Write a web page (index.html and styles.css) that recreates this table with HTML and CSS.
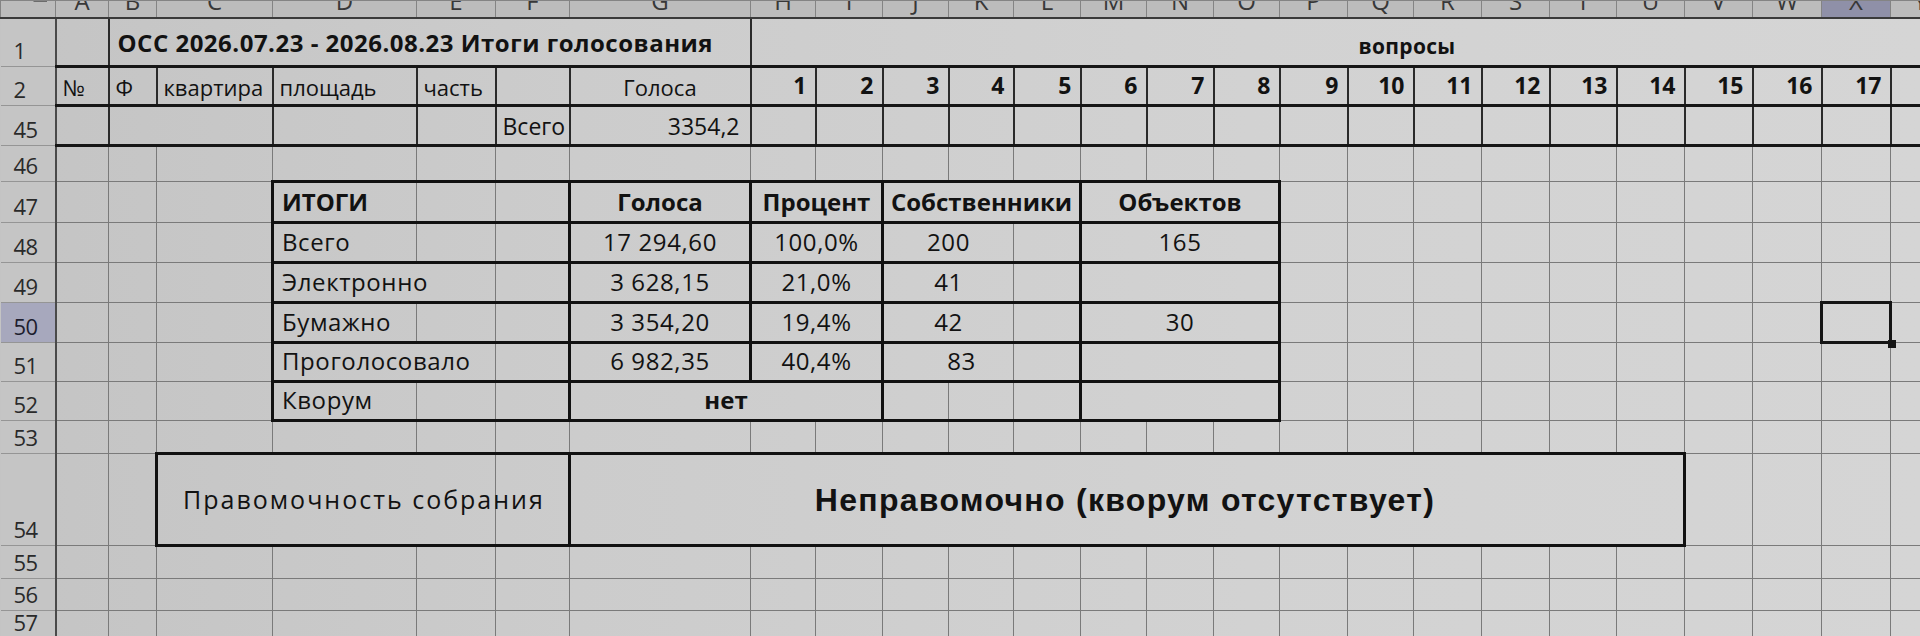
FILE: index.html
```html
<!DOCTYPE html>
<html lang="ru">
<head>
<meta charset="utf-8">
<title>ОСС Итоги голосования</title>
<link rel="stylesheet" href="styles.css">
</head>
<body>
<table class="sheet">
<colgroup>
<col class="c-rh"><col class="c-a"><col class="c-b"><col class="c-c"><col class="c-d"><col class="c-e"><col class="c-f"><col class="c-g">
<col class="c-h"><col class="c-i"><col class="c-j"><col class="c-k"><col class="c-l"><col class="c-m"><col class="c-n"><col class="c-o">
<col class="c-p"><col class="c-q"><col class="c-r"><col class="c-s"><col class="c-t"><col class="c-u"><col class="c-v"><col class="c-w"><col class="c-x"><col class="c-y">
</colgroup>
<tr class="r-hdr">
<th class="corner"><div class="clip"><span class="tri"></span></div></th>
<th class="colh"><div class="clip"><span>A</span></div></th>
<th class="colh"><div class="clip"><span>B</span></div></th>
<th class="colh"><div class="clip"><span>C</span></div></th>
<th class="colh"><div class="clip"><span>D</span></div></th>
<th class="colh"><div class="clip"><span>E</span></div></th>
<th class="colh"><div class="clip"><span>F</span></div></th>
<th class="colh"><div class="clip"><span>G</span></div></th>
<th class="colh"><div class="clip"><span>H</span></div></th>
<th class="colh"><div class="clip"><span>I</span></div></th>
<th class="colh"><div class="clip"><span>J</span></div></th>
<th class="colh"><div class="clip"><span>K</span></div></th>
<th class="colh"><div class="clip"><span>L</span></div></th>
<th class="colh"><div class="clip"><span>M</span></div></th>
<th class="colh"><div class="clip"><span>N</span></div></th>
<th class="colh"><div class="clip"><span>O</span></div></th>
<th class="colh"><div class="clip"><span>P</span></div></th>
<th class="colh"><div class="clip"><span>Q</span></div></th>
<th class="colh"><div class="clip"><span>R</span></div></th>
<th class="colh"><div class="clip"><span>S</span></div></th>
<th class="colh"><div class="clip"><span>T</span></div></th>
<th class="colh"><div class="clip"><span>U</span></div></th>
<th class="colh"><div class="clip"><span>V</span></div></th>
<th class="colh"><div class="clip"><span>W</span></div></th>
<th class="colh colh-sel"><div class="clip"><span>X</span></div></th>
<th class="colh"><div class="clip"><span>Y</span></div></th>
</tr>
<tr class="r-1">
<th class="rh">1</th>
<td class="hd"></td>
<td class="hd title" colspan="6">ОСС 2026.07.23 - 2026.08.23 Итоги голосования</td>
<td class="hd questions" colspan="18">вопросы</td>
</tr>
<tr class="r-2">
<th class="rh">2</th>
<td class="hd lbl">№</td>
<td class="hd lbl">Ф</td>
<td class="hd lbl">квартира</td>
<td class="hd lbl">площадь</td>
<td class="hd lbl">часть</td>
<td class="hd"></td>
<td class="hd lbl center">Голоса</td>
<td class="hd num">1</td><td class="hd num">2</td><td class="hd num">3</td><td class="hd num">4</td><td class="hd num">5</td><td class="hd num">6</td>
<td class="hd num">7</td><td class="hd num">8</td><td class="hd num">9</td><td class="hd num">10</td><td class="hd num">11</td><td class="hd num">12</td>
<td class="hd num">13</td><td class="hd num">14</td><td class="hd num">15</td><td class="hd num">16</td><td class="hd num">17</td>
<td class="hd"></td>
</tr>
<tr class="r-45">
<th class="rh">45</th>
<td class="hd"></td>
<td class="hd" colspan="2"></td>
<td class="hd"></td>
<td class="hd"></td>
<td class="hd lbl">Всего</td>
<td class="hd lbl right">3354,2</td>
<td class="hd"></td><td class="hd"></td><td class="hd"></td><td class="hd"></td><td class="hd"></td><td class="hd"></td>
<td class="hd"></td><td class="hd"></td><td class="hd"></td><td class="hd"></td><td class="hd"></td><td class="hd"></td>
<td class="hd"></td><td class="hd"></td><td class="hd"></td><td class="hd"></td><td class="hd"></td><td class="hd"></td>
</tr>
<tr class="r-46">
<th class="rh">46</th>
<td></td><td></td><td></td><td></td><td></td><td></td><td></td><td></td><td></td><td></td><td></td><td></td><td></td>
<td></td><td></td><td></td><td></td><td></td><td></td><td></td><td></td><td></td><td></td><td></td><td></td>
</tr>
<tr class="r-47">
<th class="rh">47</th>
<td></td><td></td><td></td>
<td class="t tl b">ИТОГИ</td><td class="t"></td><td class="t tr"></td>
<td class="t tr b center">Голоса</td>
<td class="t tr b center" colspan="2">Процент</td>
<td class="t tr b center" colspan="3">Собственники</td>
<td class="t tr b center" colspan="3">Объектов</td>
<td></td><td></td><td></td><td></td><td></td><td></td><td></td><td></td><td></td><td></td>
</tr>
<tr class="r-48">
<th class="rh">48</th>
<td></td><td></td><td></td>
<td class="t tl">Всего</td><td class="t"></td><td class="t tr"></td>
<td class="t tr center">17 294,60</td>
<td class="t tr center" colspan="2">100,0%</td>
<td class="t center" colspan="2">200</td><td class="t tr"></td>
<td class="t tr center" colspan="3">165</td>
<td></td><td></td><td></td><td></td><td></td><td></td><td></td><td></td><td></td><td></td>
</tr>
<tr class="r-49">
<th class="rh">49</th>
<td></td><td></td><td></td>
<td class="t tl" colspan="2">Электронно</td><td class="t tr"></td>
<td class="t tr center">3 628,15</td>
<td class="t tr center" colspan="2">21,0%</td>
<td class="t center" colspan="2">41</td><td class="t tr"></td>
<td class="t tr center" colspan="3"></td>
<td></td><td></td><td></td><td></td><td></td><td></td><td></td><td></td><td></td><td></td>
</tr>
<tr class="r-50">
<th class="rh rh-sel">50</th>
<td></td><td></td><td></td>
<td class="t tl">Бумажно</td><td class="t"></td><td class="t tr"></td>
<td class="t tr center">3 354,20</td>
<td class="t tr center" colspan="2">19,4%</td>
<td class="t center" colspan="2">42</td><td class="t tr"></td>
<td class="t tr center" colspan="3">30</td>
<td></td><td></td><td></td><td></td><td></td><td></td><td></td><td></td><td class="sel"></td><td></td>
</tr>
<tr class="r-51">
<th class="rh">51</th>
<td></td><td></td><td></td>
<td class="t tl" colspan="2">Проголосовало</td><td class="t tr"></td>
<td class="t tr center">6 982,35</td>
<td class="t tr center" colspan="2">40,4%</td>
<td class="t center shift" colspan="2">83</td><td class="t tr"></td>
<td class="t tr center" colspan="3"></td>
<td></td><td></td><td></td><td></td><td></td><td></td><td></td><td></td><td></td><td></td>
</tr>
<tr class="r-52">
<th class="rh">52</th>
<td></td><td></td><td></td>
<td class="t tl">Кворум</td><td class="t"></td><td class="t tr"></td>
<td class="t tr b center" colspan="3">нет</td>
<td class="t"></td><td class="t"></td><td class="t tr"></td>
<td class="t tr" colspan="3"></td>
<td></td><td></td><td></td><td></td><td></td><td></td><td></td><td></td><td></td><td></td>
</tr>
<tr class="r-53">
<th class="rh">53</th>
<td></td><td></td><td></td><td></td><td></td><td></td><td></td><td></td><td></td><td></td><td></td><td></td><td></td>
<td></td><td></td><td></td><td></td><td></td><td></td><td></td><td></td><td></td><td></td><td></td><td></td>
</tr>
<tr class="r-54">
<th class="rh">54</th>
<td></td><td></td>
<td class="box bl" colspan="3"><span class="legit">Правомочность собрания</span></td>
<td class="box br"></td>
<td class="box bl br verdict" colspan="15">Неправомочно (кворум отсутствует)</td>
<td></td><td></td><td></td><td></td>
</tr>
<tr class="r-55">
<th class="rh">55</th>
<td></td><td></td><td></td><td></td><td></td><td></td><td></td><td></td><td></td><td></td><td></td><td></td><td></td>
<td></td><td></td><td></td><td></td><td></td><td></td><td></td><td></td><td></td><td></td><td></td><td></td>
</tr>
<tr class="r-56">
<th class="rh">56</th>
<td></td><td></td><td></td><td></td><td></td><td></td><td></td><td></td><td></td><td></td><td></td><td></td><td></td>
<td></td><td></td><td></td><td></td><td></td><td></td><td></td><td></td><td></td><td></td><td></td><td></td>
</tr>
<tr class="r-57">
<th class="rh">57</th>
<td></td><td></td><td></td><td></td><td></td><td></td><td></td><td></td><td></td><td></td><td></td><td></td><td></td>
<td></td><td></td><td></td><td></td><td></td><td></td><td></td><td></td><td></td><td></td><td></td><td></td>
</tr>
</table>
</body>
</html>
```
FILE: styles.css
```css
html, body {
  margin: 0;
  padding: 0;
  width: 1920px;
  height: 636px;
  overflow: hidden;
}
body {
  background: linear-gradient(90deg, #c4c4c4 0%, #cccccc 30%, #d2d2d2 65%, #d5d5d5 100%);
  font-family: "Open Sans", "Noto Sans", sans-serif;
  color: #121212;
}
.sheet {
  border-collapse: collapse;
  table-layout: fixed;
  width: 1950px;
}
.c-rh { width: 55px; }
.c-a { width: 53px; }
.c-b { width: 48px; }
.c-c { width: 116px; }
.c-d { width: 144px; }
.c-e { width: 79px; }
.c-f { width: 74px; }
.c-g { width: 181px; }
.c-h { width: 65px; }
.c-i { width: 67px; }
.c-j { width: 66px; }
.c-k { width: 65px; }
.c-l { width: 67px; }
.c-m { width: 66px; }
.c-n { width: 67px; }
.c-o { width: 66px; }
.c-p { width: 68px; }
.c-q { width: 66px; }
.c-r { width: 68px; }
.c-s { width: 68px; }
.c-t { width: 67px; }
.c-u { width: 68px; }
.c-v { width: 68px; }
.c-w { width: 69px; }
.c-x { width: 69px; }
.c-y { width: 60px; }

.r-hdr { height: 17px; }
.r-1 { height: 49px; }
.r-2 { height: 39px; }
.r-45 { height: 40px; }
.r-46 { height: 36px; }
.r-47 { height: 41px; }
.r-48, .r-49, .r-50 { height: 40px; }
.r-51, .r-52 { height: 39px; }
.r-53 { height: 33px; }
.r-54 { height: 92px; }
.r-55 { height: 33px; }
.r-56 { height: 32px; }
.r-57 { height: 26px; }

td, th {
  padding: 0 6px;
  border: 1px solid #7a7a7a;
  white-space: nowrap;
  overflow: visible;
  font-size: 24px;
  font-weight: 400;
  line-height: 1;
  vertical-align: bottom;
  padding-bottom: 7px;
  text-align: left;
}

/* column letter header */
.r-hdr th {
  padding: 0;
  background: #bcbcbc;
  border: 1px solid #848484;
  border-bottom: 2px solid #3a3a3a;
  vertical-align: top;
}
.clip {
  height: 15px;
  overflow: hidden;
  text-align: center;
}
.clip span {
  display: block;
  margin-top: -13px;
  font-size: 24px;
  line-height: 26px;
  color: #383838;
}
.colh-sel {
  background: #8f90a8 !important;
}
.tri {
  display: block;
  width: 0;
  height: 0;
  margin: 13px 0 0 32px;
  border-left: 14px solid transparent;
  border-bottom: 14px solid #6c6c6c;
}

/* row headers */
.rh {
  background: #c5c5c5;
  border-left: none;
  border-right: 2px solid #4a4a4a;
  border-bottom: 1px solid #959595;
  border-top: 1px solid #959595;
  color: #2a2a2a;
  font-size: 22px;
  padding: 0 0 5px 13px;
  letter-spacing: -0.5px;
}
.rh-sel {
  background: #a7a8bd;
  color: #1d1d2e;
}

/* top frozen area */
.hd {
  border: 2px solid #2a2a2a;
}
.r-1 .hd { border-bottom: 3px solid #161616; border-top: 2px solid #2a2a2a; }
.r-2 .hd { border-bottom: 3px solid #161616; }
.r-45 .hd { border-bottom: 3px solid #161616; }
.r-1 .hd.questions { border-right: none; }
.title {
  font-weight: 700;
  font-size: 24px;
  padding: 0 0 10px 8px;
  letter-spacing: 0.5px;
}
.questions {
  font-weight: 700;
  font-size: 21px;
  padding: 0 0 8px 607px;
  letter-spacing: 0.3px;
}
.lbl {
  font-size: 22px;
  padding-bottom: 6px;
}
.num {
  font-weight: 700;
  font-size: 23px;
  text-align: right;
  padding: 0 8px 7px 0;
}
.center { text-align: center; }
.right { text-align: right; padding-right: 10px; }
.r-45 .lbl { font-size: 23px; }

/* ИТОГИ table */
.t {
  border-top: 3px solid #111;
  border-bottom: 3px solid #111;
  font-size: 24px;
  letter-spacing: 0.6px;
  padding-left: 8px;
  padding-bottom: 7px;
}
.t.center { padding-left: 0; padding-right: 0; }
.tl { border-left: 3px solid #111; }
.tr { border-right: 3px solid #111; }
.b { font-weight: 700; letter-spacing: 0; }
.shift { padding-left: 26px !important; }

/* row 54 boxes */
.box {
  border-top: 3px solid #111;
  border-bottom: 3px solid #111;
  vertical-align: middle;
  padding-bottom: 0;
}
.bl { border-left: 3px solid #111; }
.br { border-right: 3px solid #111; }
.legit {
  display: block;
  padding-left: 19px;
  font-size: 25px;
  letter-spacing: 2px;
}
.verdict {
  font-family: "Liberation Sans", Arial, sans-serif;
  font-weight: 700;
  font-size: 32px;
  text-align: center;
  letter-spacing: 1.3px;
  padding-right: 10px;
}

/* selected cell */
.sel {
  position: relative;
}
.sel::after {
  content: "";
  position: absolute;
  left: -2px;
  top: -2px;
  right: -2px;
  bottom: -2px;
  border: 3px solid #151515;
}
.sel::before {
  content: "";
  position: absolute;
  right: -6px;
  bottom: -6px;
  width: 8px;
  height: 8px;
  background: #151515;
  z-index: 1;
}
```
